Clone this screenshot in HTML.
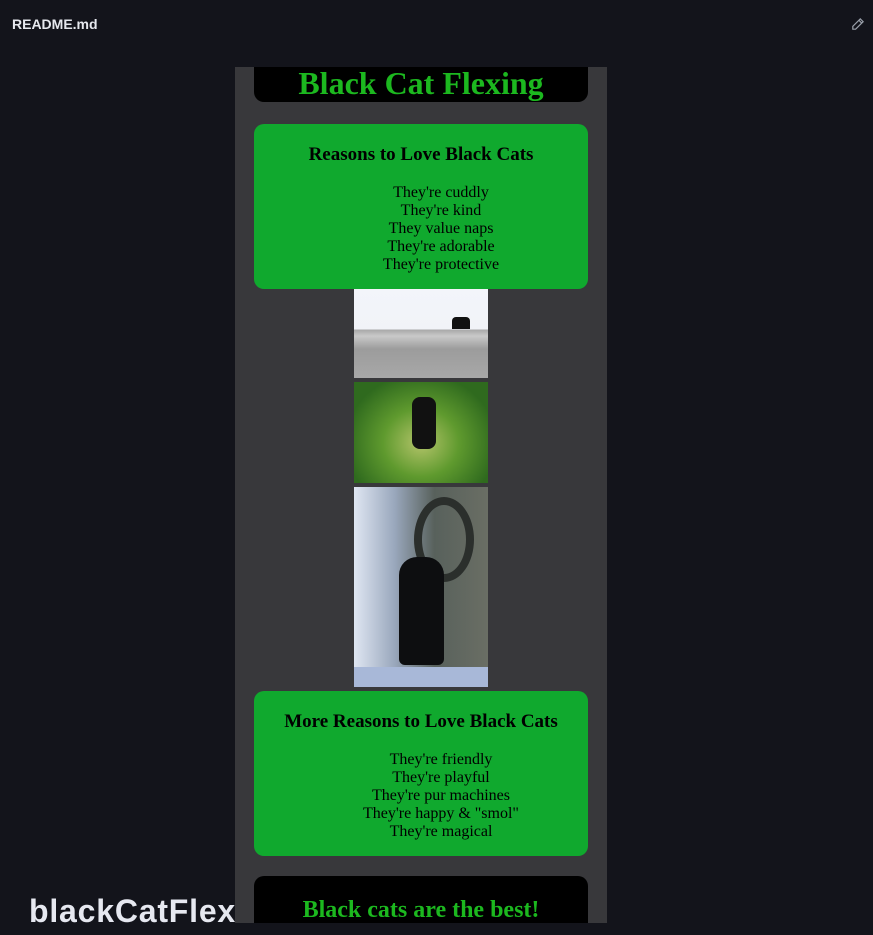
<!DOCTYPE html>
<html><head><style>
body{margin:0;width:873px;height:935px;background:#13141b;position:relative;overflow:hidden;font-family:"Liberation Serif",serif}
.hdr{position:absolute;left:12px;top:16px;font:bold 14px "Liberation Sans",sans-serif;color:#e6e8ee}
.panel{position:absolute;left:235px;top:67px;width:372px;height:856px;background:#38383b;overflow:hidden}
.box{position:absolute;left:19px;width:334px;border-radius:10px;text-align:center}
.black{background:#000;color:#1cb81f;font-weight:bold}
.green{background:#10a92e;color:#000}
.green h3{margin:0;font-size:19px;padding-top:20px}
.green .l{font-size:16px;line-height:18px;margin-top:18px;padding-left:40px}
.img{position:absolute;left:119px;width:134px}
.foot{position:absolute;left:29px;top:893px;font:bold 32px "Liberation Sans",sans-serif;color:#e6e8f0;letter-spacing:0.8px}
</style></head><body>
<div class="hdr">README.md</div>
<svg style="position:absolute;left:850px;top:17px" width="15" height="15" viewBox="0 0 16 16"><path d="M11 2l3 3-8 8H3v-3z M9.5 3.5l3 3" fill="none" stroke="#9aa0aa" stroke-width="1.3"/></svg>
<div class="panel">
<div class="box black" style="top:-10px;height:45px;font-size:32px;line-height:52px">Black Cat Flexing</div>
<div class="box green" style="top:57px;height:165px"><h3>Reasons to Love Black Cats</h3><div class="l">They're cuddly<br>They're kind<br>They value naps<br>They're adorable<br>They're protective</div></div>
<div class="img" style="top:222px;height:89px;background:linear-gradient(#f3f5fa 0,#f1f3f8 40px,#a9a9a9 41px,#c9c9c9 47px,#9c9c9c 60px,#a8a8a8 89px)"><div style="position:absolute;left:98px;top:28px;width:18px;height:12px;background:#111;border-radius:4px 4px 0 0"></div></div>
<div class="img" style="top:315px;height:101px;background:radial-gradient(ellipse at 50% 60%,#b4c46a 0,#5f9a2e 40%,#2f6a1e 80%)"><div style="position:absolute;left:58px;top:15px;width:24px;height:52px;background:#111;border-radius:8px"></div></div>
<div class="img" style="top:420px;height:200px;background:linear-gradient(90deg,#dfe6f2 0,#9aa8bd 30%,#58615c 60%,#6a6e64 100%)"><div style="position:absolute;left:60px;top:10px;width:60px;height:85px;border:8px solid #2b2f2c;border-radius:50%;box-sizing:border-box"></div><div style="position:absolute;left:45px;top:70px;width:45px;height:108px;background:#0d0e10;border-radius:18px 18px 6px 6px"></div><div style="position:absolute;left:0;top:180px;width:134px;height:20px;background:#a8b8d8"></div></div>
<div class="box green" style="top:624px;height:165px"><h3>More Reasons to Love Black Cats</h3><div class="l">They're friendly<br>They're playful<br>They're pur machines<br>They're happy &amp; "smol"<br>They're magical</div></div>
<div class="box black" style="top:809px;height:80px;font-size:24px;line-height:24px"><div style="padding-top:22px">Black cats are the best!</div></div>
</div>
<div class="foot">blackCatFlex</div>
</body></html>
